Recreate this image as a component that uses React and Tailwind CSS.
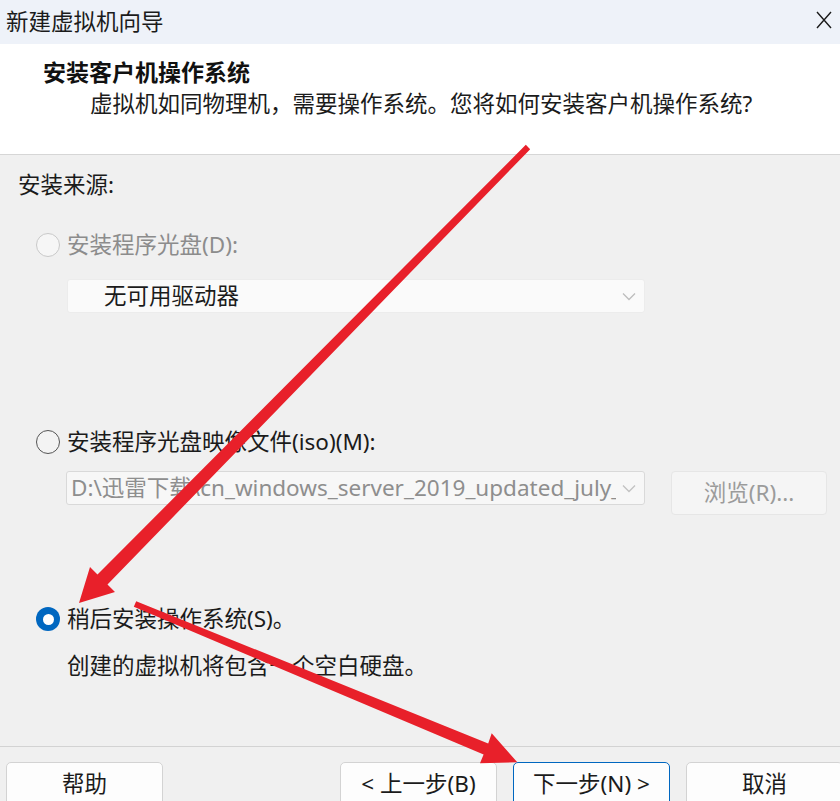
import React from "react";

const font = { fontFamily: '"Noto Sans", "Noto Sans CJK SC", sans-serif' };

const Chevron = ({ color = "#b5b5b5" }) => (
  <svg width="14" height="9" viewBox="0 0 14 9" fill="none">
    <path d="M1 1.5 L7 7.5 L13 1.5" stroke={color} strokeWidth="1.3" />
  </svg>
);

const Radio = ({ state }) => {
  if (state === "checked") {
    return (
      <span className="w-[24px] h-[24px] rounded-full bg-[#0067c0] flex items-center justify-center shrink-0">
        <span className="w-[11px] h-[11px] rounded-full bg-white" />
      </span>
    );
  }
  if (state === "disabled") {
    return (
      <span className="w-[24px] h-[24px] rounded-full border border-[#c9c9c9] bg-[#f6f6f6] shrink-0" />
    );
  }
  return (
    <span className="w-[24px] h-[24px] rounded-full border-[1.5px] border-[#555555] bg-[#f3f3f3] shrink-0" />
  );
};

const FooterButton = ({ children, primary }) => (
  <button
    className={`w-[157px] h-[44px] rounded-[5px] bg-[#fdfdfd] text-[22.5px] text-[#1b1b1b] flex items-center justify-center shrink-0 ${
      primary ? "border border-[#0067c0]" : "border border-[#d3d3d3]"
    }`}
  >
    {children}
  </button>
);

export default function App() {
  return (
    <div
      className="relative w-[840px] h-[801px] overflow-hidden flex flex-col bg-[#f0f0f0] text-[#1a1a1a]"
      style={font}
    >
      {/* Title bar */}
      <div className="h-[44px] bg-[#eef2f9] flex items-center justify-between pl-[6px] pr-[8px] shrink-0">
        <span className="text-[22.5px] leading-[30px] text-[#1b1b1b]">新建虚拟机向导</span>
        <svg width="16" height="18" viewBox="0 0 16 18" className="mb-[4px]">
          <path d="M1 1 L15 17 M15 1 L1 17" stroke="#1a1a1a" strokeWidth="1.4" />
        </svg>
      </div>

      {/* Header */}
      <div className="h-[111px] bg-white border-b border-[#d6d6d6] shrink-0 pt-[13px]">
        <div className="pl-[43px] text-[23px] leading-[30px] font-bold text-[#111111]">
          安装客户机操作系统
        </div>
        <div className="pl-[90px] mt-[2px] text-[22.5px] leading-[30px] text-[#1b1b1b]">
          虚拟机如同物理机，需要操作系统。您将如何安装客户机操作系统?
        </div>
      </div>

      {/* Body */}
      <div className="flex-1 flex flex-col pl-[18px] pt-[15px]">
        <div className="text-[22.5px] leading-[30px] text-[#1b1b1b]">安装来源:</div>

        <div className="mt-[30px] ml-[18px] flex items-center gap-[7px] h-[30px]">
          <Radio state="disabled" />
          <span className="text-[22.5px] leading-[30px] text-[#8c8c8c]">安装程序光盘(D):</span>
        </div>
        <div className="mt-[19px] ml-[49px] w-[578px] h-[34px] bg-[#fafafa] border border-[#ececec] rounded-[3px] flex items-center justify-between pl-[36px] pr-[8px]">
          <span className="text-[22.5px] text-[#1b1b1b]">无可用驱动器</span>
          <Chevron color="#bdbdbd" />
        </div>

        <div className="mt-[114px] ml-[18px] flex items-center gap-[7px] h-[30px]">
          <Radio state="off" />
          <span className="text-[22.5px] leading-[30px] text-[#1b1b1b]">安装程序光盘映像文件(iso)(M):</span>
        </div>
        <div className="mt-[14px] ml-[48px] flex items-start gap-[26px]">
          <div className="w-[579px] h-[34px] bg-[#f7f7f7] border border-[#d9d9d9] rounded-[3px] flex items-center pl-[4px] pr-[8px] overflow-hidden">
            <span className="text-[22.5px] text-[#8e8e8e] whitespace-nowrap overflow-hidden flex-1">
              D:\迅雷下载\cn_windows_server_2019_updated_july_2019
            </span>
            <span className="pl-[6px] bg-[#f7f7f7]">
              <Chevron color="#c2c2c2" />
            </span>
          </div>
          <div className="w-[156px] h-[44px] bg-[#f5f5f5] border border-[#e6e6e6] rounded-[4px] flex items-center justify-center text-[22.5px] text-[#9b9b9b]">
            浏览(R)...
          </div>
        </div>

        <div className="mt-[89px] ml-[18px] flex items-center gap-[7px] h-[30px]">
          <Radio state="checked" />
          <span className="text-[22.5px] leading-[30px] text-[#1b1b1b]">稍后安装操作系统(S)。</span>
        </div>
        <div className="mt-[17px] ml-[49px] text-[22.5px] leading-[30px] text-[#1b1b1b]">
          创建的虚拟机将包含一个空白硬盘。
        </div>
      </div>

      {/* Footer */}
      <div className="h-[55px] border-t border-[#d3d3d3] shrink-0 pt-[15px] pl-[6px] flex justify-between">
        <FooterButton>帮助</FooterButton>
        <div className="flex gap-[16px] mr-[-3px]">
          <FooterButton>&lt; 上一步(B)</FooterButton>
          <FooterButton primary>下一步(N) &gt;</FooterButton>
          <FooterButton>取消</FooterButton>
        </div>
      </div>

      {/* Red annotation arrows */}
      <svg
        className="absolute inset-0 pointer-events-none"
        width="840"
        height="801"
        viewBox="0 0 840 801"
      >
        <polygon
          fill="#e8202a"
          points="530.2,149.2 107.5,584.5 115,592 79,603 90,567 97.5,574.5 525.8,144.8"
        />
        <polygon
          fill="#e8202a"
          points="136.2,601.2 488.2,743.5 491.7,733.3 517.3,762.3 480,763.3 483.6,754.5 133.8,606.8"
        />
      </svg>
    </div>
  );
}
